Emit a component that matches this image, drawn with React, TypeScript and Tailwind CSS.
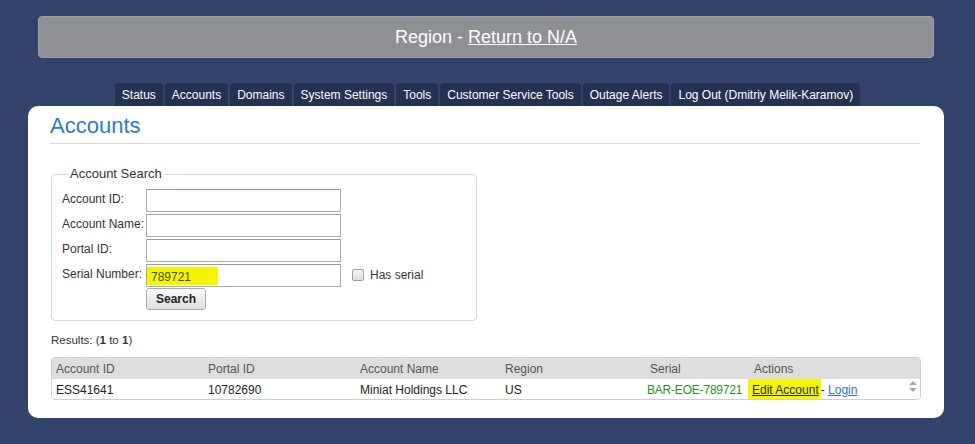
import React from "react";

const tabs = [
  "Status",
  "Accounts",
  "Domains",
  "System Settings",
  "Tools",
  "Customer Service Tools",
  "Outage Alerts",
  "Log Out (Dmitriy Melik-Karamov)",
];

function Field({ label, value, highlight, extra }: { label: string; value?: string; highlight?: boolean; extra?: React.ReactNode }) {
  return (
    <div className="flex items-start h-[25px]">
      <div className="w-[84px] pt-[1px] text-[12px] text-[#333]">{label}</div>
      <div className="relative w-[195px] h-[23px] border border-[#a9a9a9] border-t-[#999] bg-white">
        {highlight && (
          <div className="absolute left-0 top-[2px] w-[71px] h-[18px] bg-[#f5f500]" />
        )}
        {value && (
          <span className="absolute left-[4px] top-[3px] text-[12px] text-[#4a4a00]">{value}</span>
        )}
      </div>
      {extra}
    </div>
  );
}

export default function App() {
  return (
    <div
      className="w-[975px] h-[444px] bg-[#32446b] overflow-hidden"
      style={{ fontFamily: '"Liberation Sans", Arial, sans-serif' }}
    >
      <div className="pt-[16px] px-[38px] pr-[41px]">
        <div className="h-[42px] rounded-[4px] bg-[#8f9093] border border-[#9ea0a5] flex items-center justify-center text-white text-[18px]">
          <span>
            Region - <span className="underline">Return to N/A</span>
          </span>
        </div>
      </div>
      <div className="mt-[25px] flex justify-center gap-[2px] h-[23px]">
        {tabs.map((t) => (
          <div
            key={t}
            className="h-[23px] px-[7px] rounded-t-[4px] bg-[#233152] text-white text-[12px] flex items-center"
          >
            {t}
          </div>
        ))}
      </div>
      <div className="ml-[28px] w-[916px] h-[312px] bg-white rounded-[10px] pl-[22px] pr-[24px] pt-[7px]">
        <div className="text-[22px] text-[#2f7bc6] leading-[26px]">Accounts</div>
        <div className="mt-[4px] h-[1px] bg-[#dcdcdc]" />
        <fieldset className="mt-[22px] ml-[1px] w-[426px] h-[155px] border border-[#d8d8d8] rounded-[4px] pl-[10px] pt-0">
          <legend className="ml-[6px] px-[2px] text-[13px] text-[#333] leading-[16px]">Account Search</legend>
          <div className="mt-[7px]">
            <Field label="Account ID:" />
            <Field label="Account Name:" />
            <Field label="Portal ID:" />
            <Field
              label="Serial Number:"
              value="789721"
              highlight
              extra={
                <div className="flex items-center ml-[11px] mt-[2px]">
                  <div className="w-[12px] h-[12px] rounded-[2px] border border-[#a0a0a0] bg-gradient-to-b from-[#f4f4f4] to-[#dcdcdc]" />
                  <span className="ml-[6px] text-[12px] text-[#333]">Has serial</span>
                </div>
              }
            />
            <div className="ml-[84px] mt-[-1px] w-[60px] h-[22px] rounded-[3px] border border-[#a9a9a9] bg-gradient-to-b from-[#fafafa] to-[#dedede] flex items-center justify-center text-[12px] font-bold text-[#222]">
              Search
            </div>
          </div>
        </fieldset>
        <div className="mt-[11px] ml-[1px] text-[11.5px] text-[#333]">
          Results: (<b>1</b> to <b>1</b>)
        </div>
        <div className="mt-[8px] ml-[1px] w-[870px] h-[43px] border border-[#cfcfcf] rounded-[4px] overflow-hidden text-[12px]">
          <div className="h-[21px] bg-[#dedede] flex items-center text-[#555]">
            <div className="w-[152px] pl-[4px]">Account ID</div>
            <div className="w-[152px] pl-[4px]">Portal ID</div>
            <div className="w-[145px] pl-[4px]">Account Name</div>
            <div className="w-[145px] pl-[4px]">Region</div>
            <div className="w-[104px] pl-[4px]">Serial</div>
            <div className="pl-[4px]">Actions</div>
          </div>
          <div className="h-[21px] bg-white flex items-center text-[#222] relative">
            <div className="w-[152px] pl-[4px]">ESS41641</div>
            <div className="w-[152px] pl-[4px]">10782690</div>
            <div className="w-[145px] pl-[4px]">Miniat Holdings LLC</div>
            <div className="w-[145px] pl-[4px]">US</div>
            <div className="w-[104px] pl-[1px] text-[#2e8b2e] whitespace-nowrap tracking-[-0.2px]">BAR-EOE-789721</div>
            <div className="ml-[-2px] flex items-center whitespace-nowrap self-stretch">
              <span className="bg-[#f5f500] pl-[4px] pr-[2px] h-full flex items-center">
                <span className="underline text-[#2a2a00]">Edit Account</span>
              </span>
              <span className="text-[#222]">-&nbsp;</span>
              <span className="underline text-[#2a6ed8]">Login</span>
            </div>
            <div className="absolute right-[3px] top-[2px] flex flex-col items-center gap-[3px]">
              <div className="w-0 h-0 border-l-[4px] border-r-[4px] border-b-[4px] border-l-transparent border-r-transparent border-b-[#a8a8a8]" />
              <div className="w-0 h-0 border-l-[4px] border-r-[4px] border-t-[4px] border-l-transparent border-r-transparent border-t-[#a8a8a8]" />
            </div>
          </div>
        </div>
      </div>
    </div>
  );
}
